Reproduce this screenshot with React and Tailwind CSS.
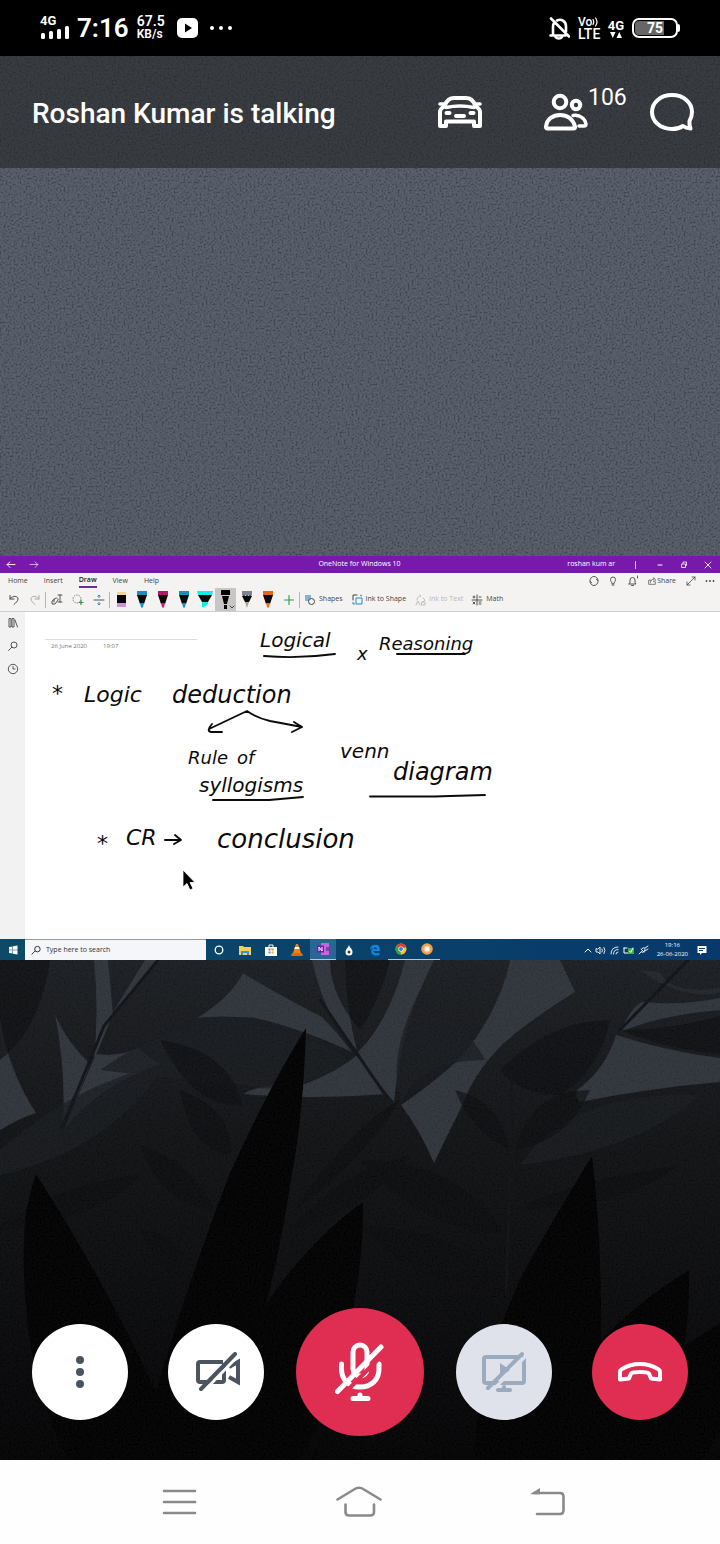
import React from "react";

const line = {
  fill: "none",
  stroke: "currentColor",
  strokeLinecap: "round",
  strokeLinejoin: "round",
};

function Grain({ id, opacity }) {
  return (
    <svg className="pointer-events-none absolute inset-0 h-full w-full" aria-hidden="true">
      <filter id={id} x="0" y="0" width="100%" height="100%">
        <feTurbulence type="fractalNoise" baseFrequency="0.5" numOctaves="2" seed="4" />
        <feColorMatrix values="1.8 0 0 0 -.55  1.8 0 0 0 -.55  1.8 0 0 0 -.5  0 0 0 0 1" />
      </filter>
      <rect width="100%" height="100%" filter={`url(#${id})`} opacity={opacity} />
    </svg>
  );
}

function StatusBar() {
  return (
    <div className="flex h-14 items-center justify-between bg-black pr-[42px] pl-10 text-white">
      <div className="flex items-center">
        <div className="flex w-[30px] flex-col">
          <span className="text-[13px] leading-[10px] font-bold">4G</span>
          <svg viewBox="0 0 30 14" className="h-[14px] w-[30px]" aria-hidden="true">
            <g fill="currentColor">
              <rect x="1" y="7" width="4" height="6" rx="1.500" />
              <rect x="9" y="5" width="4" height="8" rx="1.500" />
              <rect x="17" y="3" width="4" height="10" rx="1.500" />
              <rect x="25" y="0" width="4" height="13" rx="1.500" />
            </g>
          </svg>
        </div>
        <span className="ml-[7px] text-[26px] leading-[30px] font-semibold">7:16</span>
        <div className="ml-2 flex w-[30px] flex-col text-[14px] leading-[13px] font-semibold">
          <span>67.5</span>
          <span className="text-[12px]">KB/s</span>
        </div>
        <svg viewBox="0 0 21 20" className="ml-[10px] h-5 w-[21px]" aria-hidden="true">
          <rect width="21" height="20" rx="5" fill="#fff" />
          <path d="M8 5.500v9l7-4.500z" fill="#000" />
        </svg>
        <svg viewBox="0 0 24 6" className="ml-[11px] h-[6px] w-6" aria-hidden="true">
          <g fill="#fff">
            <circle cx="3" cy="3" r="2" />
            <circle cx="12" cy="3" r="2" />
            <circle cx="21" cy="3" r="2" />
          </g>
        </svg>
      </div>
      <div className="flex items-center">
        <svg viewBox="0 0 21 23" className="h-[23px] w-[21px]" aria-hidden="true">
          <g {...line} strokeWidth="2.600">
            <path d="M1.500 18.500h15M4 18V10c0-2 .4-3.500 1.500-4.500M8 3.500c4-2 9 .5 9 6v5M2 1.500l18 18" />
            <path d="M6.500 20c1.500 2 5 2 6.500 0" />
          </g>
        </svg>
        <div className="ml-2 flex w-6 flex-col leading-[12px]">
          <span className="flex items-center text-[12px] font-medium">
            Vo
            <svg viewBox="0 0 7 10" className="h-[10px] w-[7px]" aria-hidden="true">
              <path d="M1 2.500q1.500 2.500 0 5M3.500 1q3 4 0 8" {...line} strokeWidth="1.200" />
            </svg>
          </span>
          <span className="text-[14px] font-medium">LTE</span>
        </div>
        <div className="ml-[5px] flex w-[18px] flex-col items-center">
          <span className="text-[13px] leading-[13px] font-bold">4G</span>
          <svg viewBox="0 0 12 6" className="h-[6px] w-3" aria-hidden="true">
            <path d="M0 0h5.500l-2.700 6zM6.500 6h5.500L9.300 0z" fill="#fff" />
          </svg>
        </div>
        <div className="relative ml-[7px] flex h-5 w-[46px] items-center justify-center rounded-[7px] border-2 border-white">
          <div className="absolute top-[1px] bottom-[1px] left-[1px] w-[29px] rounded-l-[4px] bg-[#666]" />
          <div className="absolute top-[4px] right-[-4px] h-2 w-[2px] rounded-r bg-white" />
          <span className="relative text-[14px] leading-none font-bold">75</span>
        </div>
      </div>
    </div>
  );
}

function CallHeader() {
  return (
    <header className="relative flex h-28 items-center bg-[#313439] pr-[26px] pl-8 text-white">
      <Grain id="grain-head" opacity="0.05" />
      <h1 className="relative flex-1 pt-1 text-[28px] font-medium">Roshan Kumar is talking</h1>
      <div className="relative flex items-center">
        <button type="button" aria-label="Driving mode">
          <svg viewBox="0 0 44 32" className="h-8 w-11" aria-hidden="true">
            <g {...line} strokeWidth="4">
              <path d="M7 9c2-5 5-7 9-7h12c4 0 7 2 9 7" />
              <path d="M2 8h4M38 8h4" strokeWidth="3.500" />
              <path d="M8 11.500Q22 8.500 36 11.500" strokeWidth="3.500" />
              <path d="M7 10C4 11.500 2 13 2 16v14h6v-4.500h28V30h6V16c0-3-2-4.500-5-6" />
              <path d="M8.500 17h3M32.500 17h3M18 20h8" />
            </g>
          </svg>
        </button>
        <button type="button" aria-label="Participants" className="ml-[62px] flex items-start">
          <svg viewBox="0 0 44 38" className="h-[38px] w-11" aria-hidden="true">
            <g {...line} strokeWidth="4">
              <circle cx="16" cy="9" r="6.300" />
              <circle cx="32" cy="12" r="4.200" />
              <path d="M2 33.500C3 26 9 22 16 22s13 4 15 11.500q.3 2-1.500 2h-26Q1.800 35.500 2 33.500z" />
              <path d="M29 22.500c6-1 12 2.500 13 8.500q0 2-2 2h-5" strokeWidth="3.500" />
            </g>
          </svg>
          <span className="-mt-2 w-[40px] text-left text-[23px] leading-[26px]">106</span>
        </button>
        <button type="button" aria-label="Chat" className="ml-[22px]">
          <svg viewBox="0 0 44 38" className="h-[38px] w-11" aria-hidden="true">
            <path d="M22 2C10.500 2 2 9.500 2 19s8.500 17 20 17c4.500 0 8-1 11-3 2 1.500 4.500 2.300 7.500 2.500-.8-2-1.300-5-1-7.500 1.500-2.500 2.500-5.500 2.500-9C42 9.500 33.500 2 22 2z" {...line} strokeWidth="4" />
          </svg>
        </button>
      </div>
    </header>
  );
}

function Tiny({ d, box = "0 0 12 12", className = "h-3 w-3", stroke = 1, children }) {
  return (
    <svg viewBox={box} className={`shrink-0 ${className}`} aria-hidden="true">
      {d ? <path d={d} {...line} strokeWidth={stroke} /> : null}
      {children}
    </svg>
  );
}

function PenIcon({ body, tip, highlighter }) {
  const barrel = highlighter ? "M1 4h14l-4 7H5z" : "M3 4h10l-3 9H6z";
  return (
    <svg viewBox="0 0 16 18" className="h-[18px] w-4" aria-hidden="true">
      <path d={highlighter ? "M0 0h16l-1 4H1z" : "M3 0h10v4H3z"} fill={body} />
      <path d={barrel} fill="#0a0a0a" />
      <path d={highlighter ? "M5 11h6v2l-4 3H5z" : "M6 12h4l-1 4-1 1-1-1z"} fill={tip} />
    </svg>
  );
}

function OneNoteTitle() {
  return (
    <div className="flex h-[17px] items-center bg-[#7719aa] text-[7px] text-white">
      <div className="flex flex-1 gap-[11px] pl-[5px]">
        <button type="button" aria-label="Back"><Tiny d="M2 5.500h8M5 3L2 5.500l3 3" stroke={0.9} /></button>
        <button type="button" aria-label="Forward" className="opacity-70"><Tiny d="M2 5.500h8M7 3l3 2.500-3 3" stroke={0.9} /></button>
      </div>
      <span>OneNote for Windows 10</span>
      <div className="flex flex-1 items-center justify-end pr-[6px]">
        <span>roshan kum ar</span>
        <span className="ml-[20px] h-[8px] w-px bg-white/70" />
        <button type="button" aria-label="Minimise" className="ml-[18px]"><Tiny d="M4 6h4" /></button>
        <button type="button" aria-label="Restore" className="ml-3"><Tiny d="M4 5h3.500v3.500H4zM5 4.500v-1.500h3.500v3.500h-1" stroke={0.8} /></button>
        <button type="button" aria-label="Close" className="ml-3"><Tiny d="M3 3l6 6M9 3l-6 6" stroke={0.9} /></button>
      </div>
    </div>
  );
}

function OneNoteTabs() {
  return (
    <div className="flex h-[15px] items-center bg-[#f4f3f2] text-[7px] text-[#444]">
      <nav className="flex flex-1 items-center gap-4 pt-px pl-2">
        <button type="button">Home</button>
        <button type="button">Insert</button>
        <button type="button" className="h-[14px] border-b-2 border-[#6b2f8f] pt-px font-semibold text-[#222]">Draw</button>
        <button type="button">View</button>
        <button type="button">Help</button>
      </nav>
      <div className="flex items-center pt-px pr-1">
        <button type="button" aria-label="Sync"><Tiny d="M2 5.500a4 4 0 0 1 8 0M10 6.500a4 4 0 0 1-8 0M8.500 4.500L10 5.500M2 6.500l1.500 1" stroke={0.9} /></button>
        <button type="button" aria-label="Tell me" className="ml-[7px]"><Tiny d="M5 8.500C5 7 3.500 6.500 3.500 4.500a2.500 2.500 0 0 1 5 0C8.500 6.500 7 7 7 8.500zM5 10h2" stroke={0.9} /></button>
        <button type="button" aria-label="Notifications" className="ml-2"><Tiny d="M2 9h7L8 7.500V5a2.500 2.500 0 0 0-5 0v2.500zM4.500 10.500h2M10.500 1v2" stroke={0.9} /></button>
        <button type="button" className="ml-2 flex items-center"><Tiny d="M5 5H2v5h8V7M4 8c0-3 2-4 4-4V2l2.500 3L8 7V6" stroke={0.8} className="h-[10px] w-[10px]" />Share</button>
        <button type="button" aria-label="Full screen" className="ml-[9px]"><Tiny d="M2 10l8-8M7 2h3v3M5 10H2V7" stroke={0.8} /></button>
        <button type="button" aria-label="More" className="ml-[7px]"><Tiny stroke={1}><g fill="#444"><circle cx="2.500" cy="6" r=".9" /><circle cx="6" cy="6" r=".9" /><circle cx="9.500" cy="6" r=".9" /></g></Tiny></button>
      </div>
    </div>
  );
}

const cell = "flex h-[23px] w-[21px] items-center justify-center";

function OneNoteTools() {
  return (
    <div className="flex h-6 items-center border-b border-[#cfcfcf] bg-[#f4f3f2] pl-[3px] text-[7px] text-[#444]">
      <button type="button" aria-label="Undo" className={cell}><Tiny d="M2 1.500V5h4M2 5c2-3.500 8-3.500 8 0 0 2-2 3.500-4 5.500" /></button>
      <button type="button" aria-label="Redo" className={`${cell} text-[#aaa]`}><Tiny d="M10 1.500V5H6M10 5C8 1.500 2 1.500 2 5c0 2 2 3.500 4 5.500" /></button>
      <span className="h-[16px] w-px bg-[#b5b5b5]" />
      <button type="button" aria-label="Select objects or type" className={cell}><Tiny d="M7 1h4M9 1v7M7 8h4M5 4L1 7v3h3l3-4zM3 5v3" stroke={0.9} /></button>
      <button type="button" aria-label="Lasso select" className={cell}>
        <Tiny><circle cx="5" cy="5" r="4" fill="none" stroke="#777" strokeWidth=".9" strokeDasharray="1.500 1" /><path d="M9 6v5M6.500 8.500h5" stroke="#2c9a45" strokeWidth="1.200" /></Tiny>
      </button>
      <button type="button" aria-label="Insert space" className={cell}><Tiny d="M1 6h10" stroke={0.9}><path d="M6 1v3M4.500 2.500L6 1l1.500 1.500M6 8v3M4.500 9.500L6 11l1.500-1.500" fill="none" stroke="#2386c8" /></Tiny></button>
      <span className="h-[16px] w-px bg-[#b5b5b5]" />
      <button type="button" aria-label="Eraser" className={cell}>
        <svg viewBox="0 0 16 18" className="h-[18px] w-4" aria-hidden="true"><path d="M4 1h9v3H4z" fill="#f3d58d" /><path d="M4 4h9v8H4z" fill="#080808" /><path d="M4 12h9v4H4z" fill="#cf91d7" /></svg>
      </button>
      <button type="button" aria-label="Blue pen" className={cell}><PenIcon body="#188fc2" tip="#188fc2" /></button>
      <button type="button" aria-label="Pink pen" className={cell}><PenIcon body="#b41566" tip="#d0187a" /></button>
      <button type="button" aria-label="Blue pen, fine" className={cell}><PenIcon body="#188fc2" tip="#188fc2" /></button>
      <button type="button" aria-label="Highlighter" className={cell}><PenIcon body="#18e8ee" tip="#18e8ee" highlighter /></button>
      <button type="button" aria-label="Black pen" className={`${cell} bg-[#c8c6c5]`}>
        <svg viewBox="0 0 21 20" className="h-5 w-[21px]" aria-hidden="true"><path d="M6 0h9v5H6zM7 6h7l-2 8H9zM9 15h3v4H9z" /><path d="M15 16l2 2 2-2" {...line} /></svg>
      </button>
      <button type="button" aria-label="Pencil" className={cell}>
        <svg viewBox="0 0 16 18" className="h-[18px] w-4" aria-hidden="true"><path d="M3 0h10v4H3z" fill="#7c858f" /><path d="M3 5l2-1 1.500 1L8 4l1.500 1L11 4l2 1-3 6H6z" fill="#0a0a0a" /><path d="M6 11h4l-2 6z" fill="#a5a5a5" /></svg>
      </button>
      <button type="button" aria-label="Orange pen" className={cell}><PenIcon body="#e8640f" tip="#f0700f" /></button>
      <button type="button" aria-label="Add pen" className={`${cell} text-[#2c9a45]`}><Tiny d="M6 1.500v9M1.500 6h9" stroke={1.1} /></button>
      <span className="h-[16px] w-px bg-[#b5b5b5]" />
      <button type="button" className="ml-1 flex items-center gap-[3px]">
        <Tiny><path d="M1 1h6v6H1z" fill="#7fb6e0" /><circle cx="7.500" cy="7.500" r="3" fill="#f4f3f2" stroke="#444" /></Tiny>Shapes
      </button>
      <button type="button" className="ml-[9px] flex items-center gap-[2px]">
        <Tiny d="M1 6V1h4"><path d="M4 4h6v6H4zM1 8v2h2M8 1l2 1" fill="none" stroke="#2386c8" /></Tiny>Ink to Shape
      </button>
      <button type="button" disabled className="ml-[9px] flex items-center gap-[2px] text-[#b7b7b7]">
        <Tiny d="M2 6c0-3 2-4 4-4L5 1M1 11l2-4 2 4M8 4l2 2-2 2M7 8h3v3H7z" stroke={0.9} />Ink to Text
      </button>
      <button type="button" className="ml-[8px] flex items-center gap-[3px]">
        <Tiny d="M6 1v10M1 6h10M2 3h2M3 2v2M8 3h2M2 8l2 2M4 8l-2 2M8 8h2M8 10h2" stroke={0.9} />Math
      </button>
    </div>
  );
}

const ink = [
  ["Logical", "left-[235px] top-[18px] text-[20px]"],
  ["x", "left-[332px] top-[33px] text-[18px]"],
  ["Reasoning", "left-[354px] top-[23px] text-[18px]"],
  ["*", "left-[27px] top-[71px] text-[22px]"],
  ["Logic", "left-[59px] top-[72px] text-[22px]"],
  ["deduction", "left-[147px] top-[71px] text-[24px]"],
  ["Rule", "left-[163px] top-[137px] text-[18px]"],
  ["of", "left-[212px] top-[137px] text-[18px]"],
  ["syllogisms", "left-[174px] top-[163px] text-[20px]"],
  ["venn", "left-[315px] top-[129px] text-[20px]"],
  ["diagram", "left-[368px] top-[148px] text-[24px]"],
  ["*", "left-[72px] top-[221px] text-[22px]"],
  ["CR", "left-[101px] top-[215px] text-[22px]"],
  ["conclusion", "left-[192px] top-[214px] text-[26px]"],
];

function NotePage() {
  return (
    <div className="flex bg-white">
      <aside className="flex h-[327px] w-[25px] flex-col items-center gap-[11px] bg-[#f3f2f2] pt-[5px] text-[#444]">
        <button type="button" aria-label="Notebooks"><Tiny d="M2 2v8h2V2zM5 2v8h2V2zM8 3l2.500 7" stroke={0.9} /></button>
        <button type="button" aria-label="Search"><Tiny d="M1.500 10.500L5 7" stroke={0.9}><circle cx="7" cy="5" r="3" fill="none" stroke="#444" strokeWidth=".9" /></Tiny></button>
        <button type="button" aria-label="Recent"><Tiny d="M6 3.500V6h2" stroke={0.9}><circle cx="6" cy="6" r="4.700" fill="none" stroke="#444" strokeWidth=".9" /></Tiny></button>
      </aside>
      <div className="relative flex-1 overflow-hidden">
        <div className="mt-[27px] ml-5 flex w-[152px] gap-4 border-t border-[#ddd] pt-[1px] pl-[6px] text-[6px] leading-[10px] text-[#777]">
          <span>26 June 2020</span>
          <span>19:07</span>
        </div>
        {ink.map(([word, place], i) => (
          <span
            key={i}
            className={`absolute leading-none whitespace-nowrap text-[#0b0b0b] italic font-['DejaVu_Sans',sans-serif] ${place}`}
          >
            {word}
          </span>
        ))}
        <svg viewBox="0 0 695 327" className="absolute top-0 left-0 h-[327px] w-[695px]" aria-hidden="true">
          <g {...line} stroke="#0b0b0b" strokeWidth="1.900">
            <path d="M239 44C262 46 288 45 310 42M372 42H440" />
            <path d="M184 117L222 99Q232 106 245 109L277 115M187 112Q181 119 186 120H197M269 110L277 115L267 120" />
            <path d="M188 188H244L278 185M345 184.500H410L425 184L460 183" />
            <path d="M140 228H155M150 223L156 228L149 232" />
          </g>
          <path d="M158 258v17l4-3.500 3 6.500 3-1.500-3-6h5z" stroke="#fff" strokeWidth=".8" />
        </svg>
      </div>
    </div>
  );
}

const slot = "flex h-[21px] w-[26px] items-center justify-center";

function TaskBar() {
  return (
    <div className="flex h-[21px] items-center bg-linear-to-r from-[#0d4a68] to-[#08396c] text-white">
      <button type="button" aria-label="Start" className="flex w-[25px] justify-center">
        <Tiny><path d="M2 3l3.500-.6v3.300H2zM6 2.300l4.500-.7v4.100H6zM2 6.300h3.500v3.300L2 9zM6 6.300h4.500v4.100L6 9.700z" fill="#fff" /></Tiny>
      </button>
      <label className="flex h-[21px] w-[181px] items-center gap-1 border-t border-[#999] bg-[#f4f6fa] pl-[6px] text-[#222]">
        <Tiny d="M1 10L4.500 6.500" className="h-[11px] w-[11px]"><circle cx="7" cy="4.500" r="3" fill="none" stroke="#222" /></Tiny>
        <input aria-label="Search" placeholder="Type here to search" className="w-[150px] bg-transparent text-[7px] text-[#222] outline-none placeholder:text-[#333]" />
      </label>
      <button type="button" aria-label="Cortana" className={slot}><Tiny><circle cx="6" cy="6" r="3.800" fill="none" stroke="#fff" strokeWidth="1.300" /></Tiny></button>
      <button type="button" aria-label="File Explorer" className={slot}><Tiny><path d="M0 2h4l1 1h7v8H0z" fill="#f4cf55" /><path d="M2 11V7h8v4H8V9H4v2z" fill="#3c8fd0" /></Tiny></button>
      <button type="button" aria-label="Store" className={slot}><Tiny><path d="M4 3V1h4v2" fill="none" stroke="#fff" /><path d="M0 3h12v9H0z" fill="#fff" /><path d="M3.500 4.500h2v2h-2z" fill="#e8502a" /><path d="M6.500 4.500h2v2h-2z" fill="#7bb83a" /><path d="M3.500 7.500h2v2h-2z" fill="#2a9fe8" /><path d="M6.500 7.500h2v2h-2z" fill="#f5b820" /></Tiny></button>
      <button type="button" aria-label="VLC" className={slot}><Tiny><path d="M5 0h2l3 9H2z" fill="#f08318" /><path d="M4 3h4l.7 2H3.300z" fill="#fff" /><path d="M1 9h10l1 3H0z" fill="#d96b12" /></Tiny></button>
      <button type="button" aria-label="OneNote" className={`${slot} border-b border-[#a9c9ea] bg-[#2a6596]`}>
        <Tiny><path d="M4 0h8v12H4z" fill="#c267dd" /><path d="M9 4h3v4H9z" fill="#8e38ba" /><path d="M0 2.500h7v7H0z" fill="#7719aa" /><path d="M2 8V4l3 4V4" fill="none" stroke="#fff" /></Tiny>
      </button>
      <button type="button" aria-label="Paint" className={slot}><Tiny><path d="M6 1C5 4 2.500 5 2.500 8a3.500 3.500 0 0 0 7 0C9.500 5 7 4 6 1z" fill="#fff" /><circle cx="6" cy="8" r="1.500" fill="#333" /></Tiny></button>
      <button type="button" aria-label="Edge" className={slot}><Tiny><path d="M1 6C1 2.500 3.500.8 6.500.8 9.500.8 11.200 3 11 7H4.500c.3 2.500 4 2.800 6 1.500v2.400C6 12.700 1.700 11 2.300 7 2.600 5 4 4 5 3.700 3.500 3.500 1.800 4.500 1 6zm3.700-.8h3.200c0-2.200-3-2.200-3.200 0z" fill="#1284dd" fillRule="evenodd" /></Tiny></button>
      <button type="button" aria-label="Chrome" className={`${slot} border-b border-[#a9c9ea]`}><Tiny><circle cx="6" cy="6" r="5.500" fill="#f2c42d" /><path d="M6 6L1.200 3.300A5.500 5.500 0 0 1 11.200 4z" fill="#e24032" /><path d="M6 6L1.200 3.300A5.500 5.500 0 0 0 5.500 11.500z" fill="#2f9e50" /><circle cx="6" cy="6" r="2.600" fill="#fff" /><circle cx="6" cy="6" r="2" fill="#3c7de0" /></Tiny></button>
      <button type="button" aria-label="GoToMeeting" className={`${slot} border-b border-[#a9c9ea]`}><Tiny><circle cx="6" cy="6" r="5.800" fill="#f0a04b" /><path d="M6 3v6M3 6h6M4 4l4 4M8 4l-4 4" stroke="#fff" strokeWidth="1.100" strokeLinecap="round" /></Tiny></button>
      <div className="flex flex-1 items-center justify-end gap-[2px] pr-3">
        <Tiny d="M2 7l3-3 3 3" box="0 0 10 10" className="h-[10px] w-[10px]" />
        <Tiny d="M1 5v3h2l2 2V3L3 5zM7 5q1 1.500 0 3M9 3.500q2 3 0 6" stroke={0.9} />
        <Tiny d="M2 10q0-7 7-7M4.500 10q0-4.500 4.500-4.500M7 10q0-2 2-2" stroke={0.9} />
        <Tiny d="M1 4v5h5M1 4h3"><path d="M5 4h6v6H5z" fill="#3fae4b" /><path d="M6.500 7l1.200 1.500L10 4" {...line} /></Tiny>
        <Tiny d="M2 10l3-3M4 5l3 3M5 4.500q3-2 3 1t-3 3M8 4l3-2M8 7l3-2" stroke={0.9} />
        <div className="mx-[6px] flex flex-col items-center text-[6px] leading-[9px]">
          <span>19:16</span>
          <span>26-06-2020</span>
        </div>
        <Tiny><path d="M1.500 2h9v7H6l-2 2V9H1.500z" fill="#fff" /><path d="M3 4.500h6M3 6.500h4" stroke="#08396c" /></Tiny>
      </div>
    </div>
  );
}

function SharedScreen() {
  return (
    <section aria-label="Shared screen" className="relative font-['Open_Sans',sans-serif]">
      <OneNoteTitle />
      <OneNoteTabs />
      <OneNoteTools />
      <NotePage />
      <TaskBar />
    </section>
  );
}

function Foliage() {
  return (
    <svg viewBox="0 0 720 500" preserveAspectRatio="xMidYMin slice" className="absolute inset-0 h-full w-full" aria-hidden="true">
      <defs>
        <linearGradient id="night" x1="0" y1="0" x2="0" y2="1">
          <stop offset="0" stopColor="#1c1f23" />
          <stop offset=".35" stopColor="#121315" />
          <stop offset="1" stopColor="#030304" />
        </linearGradient>
      </defs>
      <rect width="720" height="500" fill="url(#night)" />
      <g fill="#30343b">
        <path d="M197 58Q230 38 243 13Q270 30 322 57Q337 72 352 92Q300 68 255 58Q220 55 197 58z" />
        <path d="M312 0H345Q346 50 357 90Q325 60 312 0z" />
        <path d="M405 0H434Q408 50 398 110L394 142Q375 120 358 92Q390 60 405 0z" />
        <path d="M243 134Q265 122 305 124Q340 110 357 95Q370 115 386 134Q310 140 243 134z" />
        <path d="M510 0H560L575 32Q530 60 505 82Q475 110 460 150Q445 180 434 203Q420 170 401 145Q440 118 462 96Q500 50 510 0z" />
        <path d="M620 72Q635 40 645 42Q680 46 720 38V50Q660 55 620 72z" />
        <path d="M616 75Q670 92 720 98V122Q650 128 580 142Q575 138 577 130Q605 110 616 75z" />
        <path d="M55 54Q65 80 90 104Q75 145 63 165Q66 110 55 54z" />
        <path d="M96 94Q120 97 138 88Q150 98 160 104Q100 125 65 168Q80 130 96 94z" />
        <path d="M0 58Q8 110 36 153Q20 158 0 170z" />
        <path d="M94 0H108L113 54L94 100Q99 50 94 0zM145 0H158L113 52z" />
        <path d="M640 10Q680 40 720 33V28Q670 35 660 12z" opacity=".45" />
      </g>
      <g fill="#191c20" opacity=".75">
        <path d="M100 110Q170 60 240 60Q300 70 350 100Q290 140 240 124Q180 120 100 110z" />
        <path d="M420 30Q470 70 485 100Q420 100 402 142Q385 100 420 30z" />
        <path d="M0 190Q80 120 165 105Q110 190 0 215zM520 205Q570 130 700 135Q640 190 520 205z" />
      </g>
      <g fill="#0b0c0e" opacity=".6">
        <path d="M160 80Q230 90 242 145Q195 150 160 80zM180 130Q190 190 230 195Q235 150 180 130z" />
        <path d="M300 240Q360 160 400 140Q360 205 295 250zM290 270Q340 210 410 195Q370 250 290 270z" />
        <path d="M360 200Q460 200 505 274Q420 270 360 200zM360 265Q470 270 505 330Q420 330 360 265z" />
        <path d="M0 265Q70 220 140 215Q100 260 0 270zM140 185Q190 200 215 250Q160 245 140 185zM140 270Q180 270 190 320Q155 310 140 270z" />
        <path d="M455 130Q500 140 510 190Q470 170 455 130zM515 190Q530 130 590 130Q570 180 515 190zM515 250Q570 220 680 205Q620 250 515 250z" />
        <path d="M500 110Q550 60 610 60Q600 110 560 135Q520 135 500 110zM0 0H50Q40 70 0 100zM330 0H390Q380 40 360 70Q330 35 330 0z" />
        <path d="M620 70Q670 70 720 56V94Q670 90 620 70z" />
      </g>
      <g {...line} stroke="#111317" strokeWidth="3">
        <path d="M320 40L386 136M158 0L104 66L62 168M688 0L620 70" />
        <path d="M512 110Q510 240 506 330" strokeWidth="2" />
      </g>
      <g fill="#010101">
        <path d="M306 68Q304 150 291 220Q280 290 266 344Q310 280 363 242Q364 290 354 342Q340 430 298 500H69Q20 410 24 278Q25 245 36 214Q110 330 156 433Q185 330 230 213Q270 125 306 68z" />
        <path d="M592 196Q602 280 601 380Q640 340 689 310Q690 350 684 386L720 363V470L702 500H475Q475 410 528 304Q565 240 592 196z" />
      </g>
    </svg>
  );
}

const round = "flex h-24 w-24 items-center justify-center rounded-full";

function CallControls() {
  return (
    <div className="relative flex items-center justify-between px-8">
      <div className="flex gap-10">
        <button type="button" aria-label="More options" className={`${round} bg-white text-[#4b545f]`}>
          <svg viewBox="0 0 8 32" className="h-8 w-2" aria-hidden="true"><g fill="currentColor"><circle cx="4" cy="4" r="4" /><circle cx="4" cy="16" r="4" /><circle cx="4" cy="28" r="4" /></g></svg>
        </button>
        <button type="button" aria-label="Turn camera on" className={`${round} bg-white text-[#4b545f]`}>
          <svg viewBox="0 0 48 40" className="h-10 w-12" aria-hidden="true">
            <g {...line} strokeWidth="4">
              <path d="M31 10H8Q6 10 6 12V28Q6 30 8 30H30Q32 30 32 28V12" strokeLinecap="butt" />
              <path d="M37 15L46 10V30L37 25" strokeLinecap="butt" strokeLinejoin="miter" />
              <path d="M13 38L46 4" stroke="#fff" strokeWidth="3" />
              <path d="M9 37L43 2" />
            </g>
          </svg>
        </button>
      </div>
      <button type="button" aria-label="Unmute" className="flex h-32 w-32 items-center justify-center rounded-full bg-[#e02e52] text-white">
        <svg viewBox="0 0 50 60" className="h-[60px] w-[50px]" aria-hidden="true">
          <g {...line} strokeWidth="5">
            <rect x="18" y="3" width="14" height="31" rx="7" />
            <path d="M6.500 22V27C6.500 38 14 45 25 45S44 38 44 27V22" />
            <path d="M7 54L51 9" stroke="#e02e52" strokeWidth="4" strokeLinecap="butt" />
            <path d="M2.500 49.500L46 5" />
            <path d="M25 53v3M18 56.500h15" />
          </g>
        </svg>
      </button>
      <div className="flex gap-10">
        <button type="button" disabled aria-label="Share screen" className={`${round} bg-[#dfe2ea] text-[#9caabd]`}>
          <svg viewBox="0 0 48 42" className="h-[42px] w-12" aria-hidden="true">
            <g {...line} strokeWidth="4">
              <path d="M20 12v14l10-7z" fill="currentColor" stroke="none" />
              <path d="M38 6H6Q4 6 4 8V30Q4 32 6 32H42Q44 32 44 30V7" />
              <path d="M12 40L47 4" stroke="#dfe2ea" strokeWidth="3" strokeLinecap="butt" />
              <path d="M8 37L42 3M24 36v2M18 39h12" />
            </g>
          </svg>
        </button>
        <button type="button" aria-label="Leave call" className={`${round} bg-[#e02e52] text-white`}>
          <svg viewBox="0 0 44 20" className="h-5 w-11" aria-hidden="true">
            <path d="M2 17.500V10Q2 8 4 7Q12 2 22 2T40 7Q42 8 42 10V17.500L33 16.500L31 11.500Q29 10 22 10T13 11.500L11 16.500z" {...line} strokeWidth="4" />
          </svg>
        </button>
      </div>
    </div>
  );
}

function SystemNav() {
  return (
    <nav className="flex h-[84px] items-center justify-center gap-[130px] bg-[#fefefe] text-[#8a8a8a]">
      <button type="button" aria-label="Recent apps">
        <svg viewBox="0 0 50 32" className="h-8 w-[50px]" aria-hidden="true"><path d="M10 5h31M10 16h31M10 27h31" {...line} strokeWidth="2.600" /></svg>
      </button>
      <button type="button" aria-label="Home">
        <svg viewBox="0 0 50 32" className="h-8 w-[50px]" aria-hidden="true"><path d="M3.500 13.500L20 3.500Q25 0 30 3.500L46.500 13.500M11.500 18.500V26Q11.500 29.500 15 29.500H36Q40 29.500 40 26V18.500" {...line} strokeWidth="2.600" /></svg>
      </button>
      <button type="button" aria-label="Back">
        <svg viewBox="0 0 52 32" className="h-8 w-[52px]" aria-hidden="true">
          <path d="M20 7H46Q49.500 7 49.500 11V24Q49.500 28 46 28H23" {...line} strokeWidth="2.600" />
          <path d="M16 8.300L26 2V8.300z" fill="currentColor" />
        </svg>
      </button>
    </nav>
  );
}

export default function App() {
  return (
    <div className="flex min-h-screen flex-col bg-black font-[Roboto,sans-serif]">
      <StatusBar />
      <CallHeader />
      <main className="flex flex-1 flex-col">
        <div className="relative min-h-[388px] bg-[#4a525d]">
          <Grain id="grain-top" opacity="0.12" />
        </div>
        <SharedScreen />
        <div className="relative flex flex-1 flex-col justify-end overflow-hidden pb-6">
          <Foliage />
          <Grain id="grain-low" opacity="0.03" />
          <CallControls />
        </div>
      </main>
      <SystemNav />
    </div>
  );
}
